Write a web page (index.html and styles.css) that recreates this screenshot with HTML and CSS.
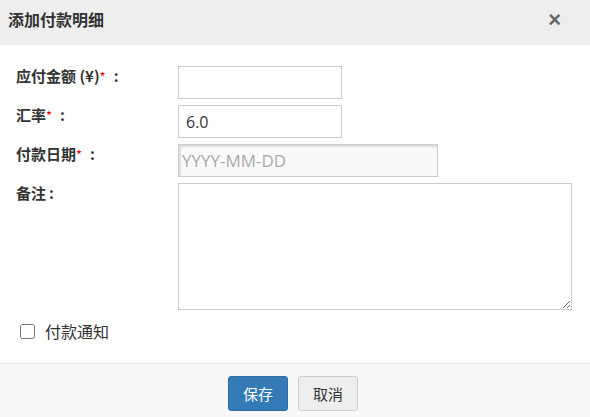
FILE: index.html
```html
<!DOCTYPE html>
<html lang="zh">
<head>
<meta charset="utf-8">
<link rel="stylesheet" href="styles.css">
</head>
<body>
<div class="modal">
  <div class="modal-header">
    <h4 class="title">添加付款明细</h4>
    <span class="close">×</span>
  </div>
  <div class="modal-body">
    <div class="row">
      <label class="lbl">应付金额 (¥)<span class="req">*</span><span class="colon">:</span></label>
      <input class="field short" type="text">
    </div>
    <div class="row">
      <label class="lbl">汇率<span class="req">*</span><span class="colon">:</span></label>
      <input class="field short" type="text" value="6.0">
    </div>
    <div class="row">
      <label class="lbl">付款日期<span class="req">*</span><span class="colon">:</span></label>
      <input class="field date" type="text" placeholder="YYYY-MM-DD" readonly>
    </div>
    <div class="row">
      <label class="lbl">备注<span class="colon tight">:</span></label>
      <textarea class="field area"></textarea>
    </div>
    <label class="check"><input type="checkbox"><span>付款通知</span></label>
  </div>
  <div class="modal-footer">
    <button class="btn primary">保存</button>
    <button class="btn default">取消</button>
  </div>
</div>
</body>
</html>
```
FILE: styles.css
```css
html, body {
  margin: 0;
  padding: 0;
  background: #fff;
}
.modal {
  width: 590px;
  height: 417px;
  display: flex;
  flex-direction: column;
  font-family: "Noto Sans CJK SC", "Open Sans", sans-serif;
  color: #333;
}
.modal-header {
  height: 45px;
  flex: none;
  background: #eeeeee;
  display: flex;
  align-items: center;
  justify-content: space-between;
  padding: 0 29px 0 8px;
  box-sizing: border-box;
}
.title {
  margin: 0;
  font-size: 16px;
  font-weight: bold;
  color: #333;
  line-height: 1;
  position: relative;
  top: -4px;
}
.close {
  font-family: "Liberation Sans", sans-serif;
  font-size: 22px;
  font-weight: bold;
  color: #666;
  line-height: 1;
  position: relative;
  top: -3px;
}
.modal-body {
  flex: 1;
  padding: 21px 0 0 16px;
  box-sizing: border-box;
}
.row {
  display: flex;
  align-items: flex-start;
  margin-bottom: 6px;
}
.lbl {
  width: 162px;
  flex: none;
  font-size: 15px;
  font-weight: bold;
  line-height: 20px;
  color: #333;
}
.req {
  color: #e00;
  font-weight: normal;
  font-size: 13px;
}
.colon {
  margin-left: 8px;
}
.colon.tight {
  margin-left: 3px;
}
.field {
  box-sizing: border-box;
  border: 1px solid #ccc;
  border-radius: 0;
  height: 33px;
  padding: 0 7px;
  font-family: "Open Sans", sans-serif;
  font-size: 16px;
  color: #333;
  background: #fff;
  outline: none;
  margin: 0;
}
.short { width: 164px; }
.date {
  width: 260px;
  background: #fafafa;
  box-shadow: inset 2px 2px 2px rgba(0,0,0,0.12);
  padding-left: 3px;
  font-size: 17px;
}
.date::placeholder { color: #aaa; }
.area {
  width: 394px;
  height: 127px;
  resize: both;
  display: block;
}
.check {
  display: flex;
  align-items: center;
  margin-top: 9px;
  font-size: 16px;
  color: #333;
}
.check input {
  margin: 0 10px 0 4px;
  width: 15px;
  height: 15px;
}
.modal-footer {
  height: 54px;
  flex: none;
  border-top: 1px solid #e5e5e5;
  background: #f8f8f9;
  display: flex;
  justify-content: center;
  align-items: flex-start;
  gap: 10px;
  padding-top: 12px;
  padding-right: 4px;
  box-sizing: border-box;
}
.btn {
  font-family: "Noto Sans CJK SC", sans-serif;
  font-size: 15px;
  height: 35px;
  width: 60px;
  border-radius: 3px;
  padding: 0;
  line-height: 1;
}
.primary {
  background: #337ab7;
  border: 1px solid #2e6da4;
  color: #fff;
}
.default {
  background: #eee;
  border: 1px solid #ccc;
  color: #333;
}
```
